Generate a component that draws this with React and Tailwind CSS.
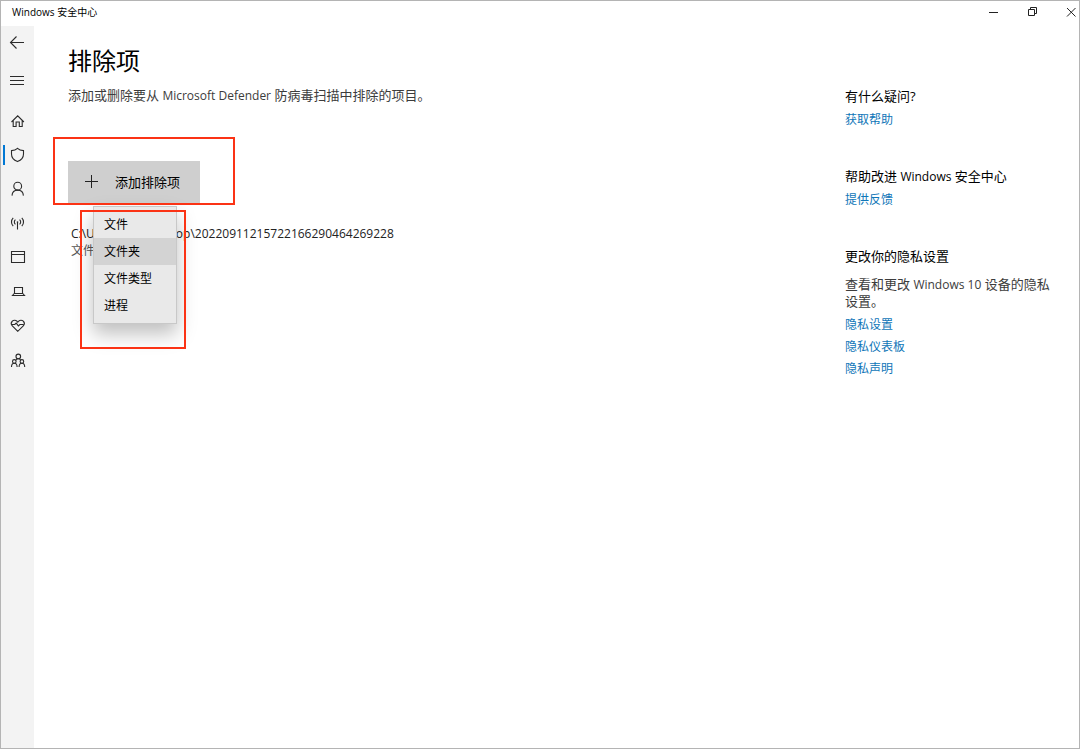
import { useState } from 'react';

const Icon = ({ children }) => (
    <svg viewBox="0 0 19 20" className="h-5 w-[19px]" fill="none" stroke="#2b2b2b" strokeWidth="1.1" aria-hidden="true">
        {children}
    </svg>
);

const navItems = [
    { id: 'home', label: '主页', icon: <Icon><path d="M3.5 11 9.7 4.8l6.2 6.2M5.2 9.6v5.9h2.9V11h3.2v4.5h2.9V9.6" /></Icon> },
    { id: 'virus', label: '病毒和威胁防护', icon: <Icon><path d="M9.5 3.4C8 4.9 6 5.6 3.5 5.6V9c0 3.8 2.3 6.2 6 7.6 3.7-1.4 6-3.8 6-7.6V5.6c-2.5 0-4.5-.7-6-2.2z" /></Icon> },
    { id: 'account', label: '帐户保护', icon: <Icon><circle cx="9.7" cy="7.2" r="3.9" /><path d="M4 16.6c.2-3.4 2.4-5.5 5.7-5.5s5.5 2.1 5.7 5.5" /></Icon> },
    {
        id: 'network',
        label: '防火墙和网络保护',
        icon: (
            <Icon>
                <circle cx="9.5" cy="9" r=".8" fill="#2b2b2b" stroke="none" />
                <path d="M9.5 9v7.5M7.4 6.6a3.2 3.2 0 0 0 0 4.8M11.6 6.6a3.2 3.2 0 0 1 0 4.8M5.2 4.8a6 6 0 0 0 0 8.4M13.8 4.8a6 6 0 0 1 0 8.4" />
            </Icon>
        ),
    },
    { id: 'app', label: '应用和浏览器控制', icon: <Icon><path d="M3.5 4.5h13v11h-13zM3.5 7.5h13" /></Icon> },
    { id: 'device', label: '设备安全性', icon: <Icon><path d="M6.5 6.5h8v6h-8zM6.2 12.5 4.5 14.5h12l-1.7-2" /></Icon> },
    {
        id: 'health',
        label: '设备性能和运行状况',
        icon: (
            <Icon>
                <path d="M9.8 16.3 4.3 10.8a3.3 3.3 0 0 1 0-4.6 3.2 3.2 0 0 1 4.6 0l.9.9.9-.9a3.2 3.2 0 0 1 4.6 0 3.3 3.3 0 0 1 0 4.6z" />
                <path d="M3.8 9.5h3l1.4-1.4 2.2 2.8 1.5-1.4h3.8" />
            </Icon>
        ),
    },
    {
        id: 'family',
        label: '家庭选项',
        icon: (
            <Icon>
                <circle cx="10.3" cy="7.4" r="2.3" />
                <circle cx="6.3" cy="12.4" r="1.8" />
                <circle cx="13.9" cy="12.4" r="1.8" />
                <path d="M7.8 11.4c.4-1 1.3-1.7 2.5-1.7s2 .7 2.4 1.7M3.5 18c0-2.3 1.1-3.8 2.8-3.8s2.8 1.5 2.8 3.8M11.1 18c0-2.3 1.1-3.8 2.8-3.8s2.8 1.5 2.8 3.8" />
            </Icon>
        ),
    },
];

const menuItems = ['文件', '文件夹', '文件类型', '进程'];

function TitleBar() {
    return (
        <header className="flex h-[25px] items-start justify-between pt-[3px] pl-[11px]">
            <span className="text-[10px] leading-4 text-black">Windows 安全中心</span>
            <div className="flex gap-[23px]">
                <button type="button" aria-label="最小化">
                    <svg viewBox="0 0 16 16" className="size-4" stroke="#222" fill="none"><path d="M4 8.5h9" /></svg>
                </button>
                <button type="button" aria-label="还原">
                    <svg viewBox="0 0 16 16" className="size-4" stroke="#222" fill="none"><path d="M4.5 5.5h6v6h-6zM6.5 5.5v-2h6v6h-2" /></svg>
                </button>
                <button type="button" aria-label="关闭">
                    <svg viewBox="0 0 16 16" className="size-4" stroke="#222" fill="none"><path d="m4 4 8.5 8.5M12.5 4 4 12.5" /></svg>
                </button>
            </div>
        </header>
    );
}

function Sidebar({ active, onSelect }) {
    return (
        <nav className="flex w-[33px] shrink-0 flex-col bg-[#f3f3f3]">
            <button type="button" aria-label="后退" className="flex h-[34px] items-center justify-center">
                <Icon><path d="M2.5 9.5H16M8.5 3.5l-6 6 6 6" /></Icon>
            </button>
            <button type="button" aria-label="打开导航" className="mt-1 mb-[6px] flex h-[34px] items-center justify-center">
                <Icon><path d="M2 5.5h14M2 9.5h14M2 13.5h14" /></Icon>
            </button>
            {navItems.map((item) => (
                <button
                    key={item.id}
                    type="button"
                    aria-label={item.label}
                    onClick={() => onSelect(item.id)}
                    className={`relative flex h-[34px] items-center justify-center ${active === item.id ? 'before:absolute before:left-[2px] before:h-5 before:w-[2px] before:bg-[#0078d4]' : ''}`}
                >
                    {item.icon}
                </button>
            ))}
        </nav>
    );
}

function SideLink({ children }) {
    return <a href="#" className="block text-xs leading-[22px] text-[#0f76b8]">{children}</a>;
}

function HelpPanel() {
    return (
        <aside className="w-[234px] shrink-0 pt-[59px] pr-6 text-[13px]">
            <section className="mb-[34px]">
                <h2 className="mb-[2px] leading-[22px] text-black">有什么疑问?</h2>
                <SideLink>获取帮助</SideLink>
            </section>
            <section className="mb-[34px]">
                <h2 className="mb-[2px] leading-[22px] text-black">帮助改进 <span className="text-xs">Windows</span> 安全中心</h2>
                <SideLink>提供反馈</SideLink>
            </section>
            <section>
                <h2 className="leading-[22px] text-black">更改你的隐私设置</h2>
                <p className="mt-[9px] mb-1 leading-[17px] text-[#3c3c3c]">
                    查看和更改 <span className="text-xs">Windows 10</span> 设备的隐私设置。
                </p>
                <SideLink>隐私设置</SideLink>
                <SideLink>隐私仪表板</SideLink>
                <SideLink>隐私声明</SideLink>
            </section>
        </aside>
    );
}

function AddExclusion() {
    const [hovered, setHovered] = useState('文件夹');

    return (
        <div className="relative mt-[54px] w-fit">
            <button type="button" className="flex h-[43px] items-center bg-[#cfcfcf] pr-5 pl-4 text-[13px] text-black">
                <svg viewBox="0 0 15 15" className="mr-4 size-[15px]" stroke="#222" fill="none" aria-hidden="true">
                    <path d="M7.5 0v13M1 6.5h13" />
                </svg>
                添加排除项
            </button>
            <ul role="menu" className="absolute top-[45px] left-[25px] z-10 w-[84px] border border-[#c8c8c8] bg-[#e9e9e9] py-1 shadow-[0_10px_18px_rgba(0,0,0,0.25)]">
                {menuItems.map((item) => (
                    <li key={item} role="none">
                        <button
                            type="button"
                            role="menuitem"
                            onMouseEnter={() => setHovered(item)}
                            className={`block h-[27px] w-full pl-[10px] text-left text-xs text-black ${hovered === item ? 'bg-[#d3d3d3]' : ''}`}
                        >
                            {item}
                        </button>
                    </li>
                ))}
            </ul>
            {/* red highlight frames */}
            <div className="pointer-events-none absolute -top-6 -left-[15px] z-20 h-[68px] w-[182px] border-2 border-[#fb3315]" />
            <div className="pointer-events-none absolute top-[49px] left-3 z-20 h-[139px] w-[106px] border-2 border-[#fb3315]" />
        </div>
    );
}

export default function App() {
    const [active, setActive] = useState('virus');

    return (
        <div className="flex min-h-screen flex-col border border-[#b4b4b4] bg-white font-['Open_Sans','Noto_Sans_CJK_SC',sans-serif]">
            <TitleBar />
            <div className="flex flex-1">
                <Sidebar active={active} onSelect={setActive} />
                <main className="min-w-0 flex-1 pt-[19px] pl-[34px]">
                    <h1 className="text-2xl leading-8 text-black">排除项</h1>
                    <p className="mt-[6px] text-[13px] leading-6 text-[#3c3c3c]">
                        添加或删除要从 <span className="text-xs">Microsoft Defender</span> 防病毒扫描中排除的项目。
                    </p>
                    <AddExclusion />
                    <div className="mt-[21px] pl-[3px] text-xs">
                        <div className="flex gap-[81px] leading-[18px] text-[#222]">
                            <span>C:\U</span>
                            <span>op\20220911215722166290464269228</span>
                        </div>
                        <div className="leading-4 text-[#555]">文件</div>
                    </div>
                </main>
                <HelpPanel />
            </div>
        </div>
    );
}
